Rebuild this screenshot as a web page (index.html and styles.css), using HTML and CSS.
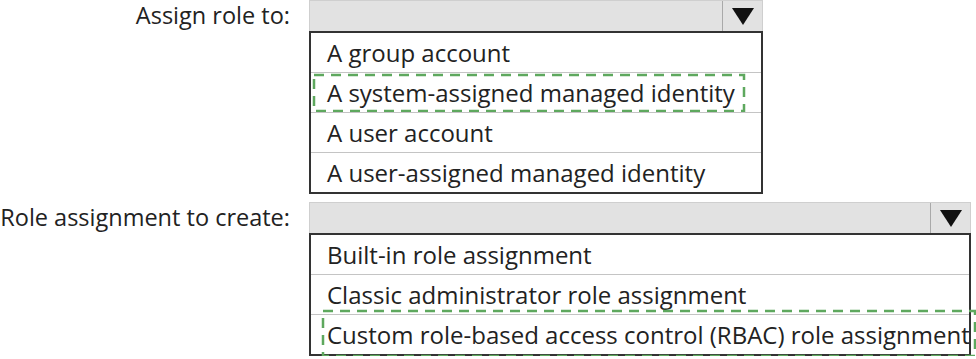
FILE: index.html
```html
<!DOCTYPE html>
<html lang="en">
<head>
    <meta charset="UTF-8" />
    <title>Role assignment</title>
    <link rel="stylesheet" href="styles.css">
</head>
<body>
    <div class="answer-area">
        <div class="field field-narrow">
            <div class="field-label">Assign role to:</div>
            <div class="select-head">
                <span class="select-value"></span>
                <span class="select-arrow">
                    <svg width="22" height="17" viewBox="0 0 22 17"><polygon points="0,0 22,0 11,17" fill="#111"/></svg>
                </span>
            </div>
            <ul class="options">
                <li>A group account</li>
                <li class="is-answer">
                    A system-assigned managed identity
                    <svg class="answer-mark mark-one"><rect x="0" y="0" width="100%" height="100%"/></svg>
                </li>
                <li>A user account</li>
                <li>A user-assigned managed identity</li>
            </ul>
        </div>

        <div class="field field-wide">
            <div class="field-label">Role assignment to create:</div>
            <div class="select-head">
                <span class="select-value"></span>
                <span class="select-arrow">
                    <svg width="22" height="17" viewBox="0 0 22 17"><polygon points="0,0 22,0 11,17" fill="#111"/></svg>
                </span>
            </div>
            <ul class="options">
                <li>Built-in role assignment</li>
                <li>Classic administrator role assignment</li>
                <li class="is-answer">
                    Custom role-based access control (RBAC) role assignment
                    <svg class="answer-mark mark-two"><rect x="0" y="0" width="100%" height="100%"/></svg>
                </li>
            </ul>
        </div>
    </div>
</body>
</html>
```

FILE: styles.css
```css
body {
    margin: 0;
    background: #fff;
    font-family: 'Open Sans', 'Noto Sans', sans-serif;
    color: #222;
    overflow: hidden;
}

.answer-area {
    display: flex;
    flex-direction: column;
    gap: 8px;
}

.field {
    display: grid;
    grid-template-columns: 309px 454px;
}

.field-wide {
    grid-template-columns: 309px 662px;
}

.field-label {
    grid-column: 1;
    grid-row: 1;
    align-self: center;
    text-align: right;
    padding-right: 19px;
    font-size: 23.5px;
    line-height: 31px;
    white-space: nowrap;
}

.select-head {
    grid-column: 2;
    grid-row: 1;
    display: flex;
    height: 31px;
    background: #e2e2e2;
    border: 1px solid #cfcfcf;
    border-bottom: none;
    box-sizing: border-box;
}

.select-value {
    flex: 1;
}

.select-arrow {
    width: 39px;
    display: flex;
    align-items: center;
    justify-content: center;
    border-left: 1px solid #a9a9a9;
}

.options {
    grid-column: 2;
    grid-row: 2;
    list-style: none;
    margin: 0;
    padding: 0;
    border: 2px solid #333;
}

.options li {
    position: relative;
    height: 39px;
    line-height: 39px;
    padding-left: 16px;
    font-size: 24px;
    white-space: nowrap;
    border-top: 1px solid #c4c4c4;
}

.options li:first-child {
    border-top: none;
}

.answer-mark {
    position: absolute;
    overflow: visible;
    pointer-events: none;
}

.answer-mark rect {
    fill: none;
    stroke: #5ea85e;
    stroke-width: 2.5;
    stroke-dasharray: 10 7;
}

.mark-one {
    left: 3px;
    top: 2px;
    width: 430px;
    height: 36px;
}

.mark-two {
    left: 12px;
    top: -4px;
    width: 652px;
    height: 45px;
}
```
